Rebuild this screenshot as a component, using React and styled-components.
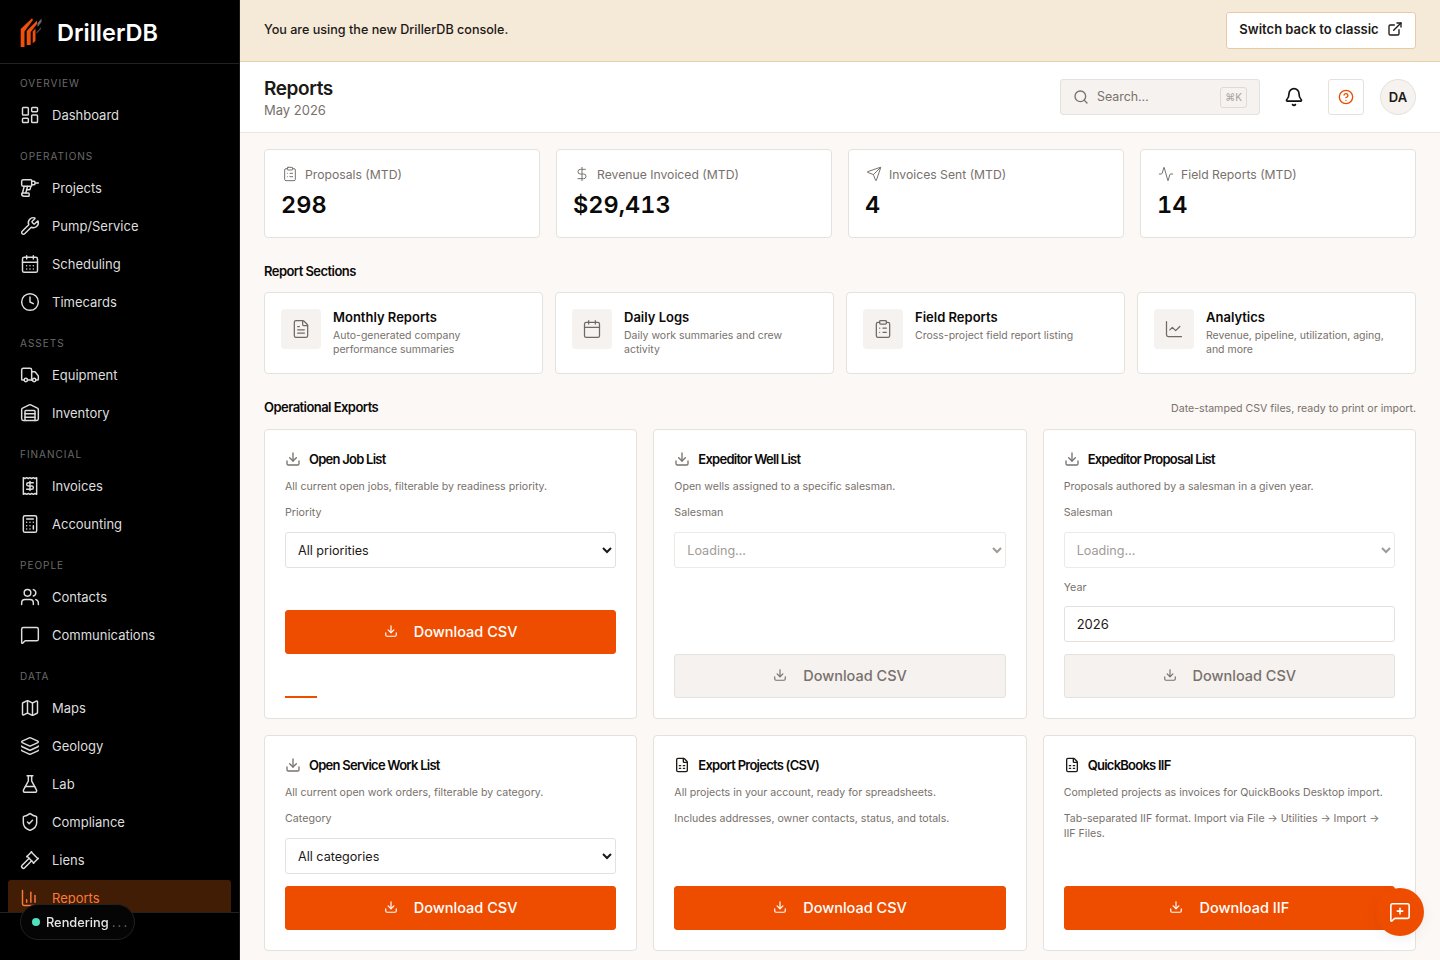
import React from 'react';
import styled, { createGlobalStyle } from 'styled-components';
import {
  Activity, Bell, Calculator, Calendar, CalendarDays, ChartColumn, ChartLine, CircleHelp, ClipboardList, Clock,
  DollarSign, Download, Drill, ExternalLink, FileSpreadsheet, FileText, FlaskConical, Gavel, Layers,
  LayoutDashboard, Map, MessageSquare, MessageSquarePlus, Receipt, Search, Send, ShieldCheck, Truck, Users,
  Warehouse, Wrench,
} from 'lucide-react';

const GlobalStyle = createGlobalStyle`
  * { box-sizing: border-box; }
  html, body { margin: 0; height: 100%; }
  body {
    font-family: Inter, "Liberation Sans", sans-serif;
    color: #1c1917;
    background: #fcf8f5;
  }
`;

const Shell = styled.div`
  display: flex;
  height: 100vh;
  overflow: hidden;
`;

const Sidebar = styled.aside`
  width: 240px;
  flex-shrink: 0;
  display: flex;
  flex-direction: column;
  background: #000;
  border-right: 1px solid #1a1a1a;
`;

const Brand = styled.div`
  height: 64px;
  flex-shrink: 0;
  display: flex;
  align-items: center;
  gap: 15px;
  padding: 2px 0 0 20px;
  border-bottom: 1px solid #222;
  font-size: 23.5px;
  font-weight: 600;
  color: #fff;
`;

const Nav = styled.nav`
  flex: 1;
  min-height: 0;
  overflow: hidden;
  padding: 12px 8px 0;
`;

const NavSection = styled.div`
  margin-bottom: 16px;
`;

const NavHeading = styled.div`
  height: 16px;
  line-height: 15px;
  margin-bottom: 5px;
  padding-left: 12px;
  font-size: 10px;
  letter-spacing: 1px;
  text-transform: uppercase;
  color: #6a6a6a;
`;

const NavItem = styled.a`
  height: 36px;
  margin-bottom: 2px;
  display: flex;
  align-items: center;
  gap: 12px;
  padding: 0 0 1px 12px;
  border-radius: 3px;
  font-size: 13px;
  font-weight: 400;
  color: ${({ $active }) => ($active ? '#f97b3b' : '#dedede')};
  background: ${({ $active }) => ($active ? '#421d05' : 'transparent')};
`;

const SidebarFoot = styled.div`
  height: 48px;
  flex-shrink: 0;
  background: #000;
  border-top: 1px solid #222;
`;

const DevPill = styled.div`
  position: fixed;
  left: 20px;
  bottom: 20px;
  width: 115px;
  height: 36px;
  display: flex;
  align-items: center;
  gap: 6px;
  padding-left: 11px;
  border: 1px solid #222;
  border-radius: 18px;
  background: #050505;
  font-size: 12.8px;
  font-weight: 500;
  color: #e5e5e5;
`;

const DevDot = styled.span`
  width: 8px;
  height: 8px;
  border-radius: 50%;
  background: #4fe0bf;
`;

const DevDots = styled.span`
  margin-left: 3px;
  letter-spacing: 2px;
  color: #666;
`;

const Main = styled.main`
  flex: 1;
  min-width: 0;
  overflow-y: auto;
  scrollbar-width: none;
`;

const Banner = styled.div`
  height: 62px;
  display: flex;
  align-items: center;
  justify-content: space-between;
  padding: 0 24px 1px;
  background: #f5e9d8;
  border-bottom: 1px solid #e8cfa9;
  font-size: 12.6px;
  font-weight: 500;
`;

const BannerText = styled.span`
  margin-top: -2px;
`;

const ClassicButton = styled.button`
  width: 190px;
  height: 37px;
  display: flex;
  align-items: center;
  justify-content: center;
  gap: 8px;
  padding: 0 0 2px;
  background: #fff;
  border: 1px solid #e8cba4;
  border-radius: 3px;
  font-family: inherit;
  font-size: 13px;
  font-weight: 600;
  color: #1c1917;
`;

const PageHeader = styled.header`
  height: 71px;
  display: flex;
  align-items: center;
  padding: 0 24px;
  background: #fff;
  border-bottom: 1px solid #ebe6e1;
`;

const Heading = styled.div`
  flex: 1;
`;

const PageTitle = styled.h1`
  margin: 0;
  font-size: 19px;
  line-height: 28px;
  font-weight: 600;
  letter-spacing: -0.4px;
`;

const PageSub = styled.div`
  margin-top: -2px;
  font-size: 13px;
  line-height: 18px;
  color: #78716c;
`;

const SearchBox = styled.div`
  width: 200px;
  height: 36px;
  display: flex;
  align-items: center;
  gap: 8px;
  padding: 0 12px;
  background: #f5f2ef;
  border: 1px solid #e5e1dc;
  border-radius: 3px;
  font-size: 12.4px;
  color: #78716c;
`;

const SearchText = styled.span`
  flex: 1;
  margin-top: -1px;
`;

const Kbd = styled.span`
  width: 27px;
  height: 21px;
  display: flex;
  align-items: center;
  justify-content: center;
  border: 1px solid #dfdad5;
  border-radius: 3px;
  font-size: 10px;
  color: #a8a29e;
`;

const BellWrap = styled.div`
  width: 36px;
  height: 36px;
  margin: 0 16px;
  display: flex;
  align-items: center;
  justify-content: center;
  color: #111;
`;

const HelpButton = styled.div`
  width: 36px;
  height: 36px;
  margin-right: 16px;
  display: flex;
  align-items: center;
  justify-content: center;
  border: 1px solid #e5e1dc;
  border-radius: 3px;
  background: #fff;
  color: #ee4d00;
`;

const Avatar = styled.div`
  width: 36px;
  height: 36px;
  display: flex;
  align-items: center;
  justify-content: center;
  border: 1px solid #e5e1dc;
  border-radius: 50%;
  background: #f5f2ef;
  font-size: 13px;
  font-weight: 600;
`;

const Content = styled.div`
  padding: 16px 24px;
`;

const KpiGrid = styled.div`
  display: grid;
  grid-template-columns: repeat(4, 1fr);
  gap: 16px;
`;

const KpiCard = styled.div`
  height: 89px;
  padding: 16px 17px 0;
  background: #fff;
  border: 1px solid #e5e1dc;
  border-radius: 4px;
`;

const KpiLabel = styled.div`
  display: flex;
  align-items: center;
  gap: 7px;
  height: 16px;
  font-size: 12.2px;
  color: #78716c;
  svg { color: #78716c; }
`;

const KpiValue = styled.div`
  margin: 7px 0 0 -1px;
  font-size: 23.5px;
  line-height: 32px;
  font-weight: 600;
  font-variant-numeric: tabular-nums;
  color: #0c0a09;
`;

const SectionHead = styled.div`
  display: flex;
  align-items: center;
  justify-content: space-between;
  height: 18px;
  margin: ${({ $top }) => $top}px 0 ${({ $bottom }) => $bottom}px;
`;

const SectionTitle = styled.h2`
  margin: 0;
  font-size: 13px;
  font-weight: 600;
  letter-spacing: -0.55px;
  color: #0c0a09;
`;

const SectionNote = styled.span`
  margin-top: 2px;
  font-size: 10.6px;
  color: #78716c;
`;

const LinkGrid = styled.div`
  display: grid;
  grid-template-columns: repeat(4, 1fr);
  gap: 12px;
`;

const LinkCard = styled.a`
  height: 82px;
  display: flex;
  gap: 12px;
  padding: 16px;
  background: #fff;
  border: 1px solid #e5e1dc;
  border-radius: 4px;
`;

const LinkIcon = styled.div`
  width: 40px;
  height: 40px;
  flex-shrink: 0;
  display: flex;
  align-items: center;
  justify-content: center;
  background: #f5f2ef;
  border-radius: 4px;
  color: #6f6a65;
`;

const LinkTitle = styled.div`
  font-size: 13px;
  line-height: 17px;
  font-weight: 600;
  color: #0c0a09;
`;

const LinkText = styled.div`
  margin-top: 3px;
  font-size: 10.5px;
  line-height: 14px;
  color: #78716c;
`;

const ExportGrid = styled.div`
  display: grid;
  grid-template-columns: repeat(3, 1fr);
  gap: 16px;
`;

const ExportCard = styled.div`
  display: flex;
  flex-direction: column;
  padding: 20px;
  background: #fff;
  border: 1px solid #e5e1dc;
  border-radius: 4px;
`;

const ExportHead = styled.div`
  height: 18px;
  display: flex;
  align-items: center;
  gap: 8px;
  margin-bottom: 11px;
  font-size: 13px;
  font-weight: 600;
  letter-spacing: -0.75px;
  color: #0c0a09;
  svg { color: ${({ $iconColor }) => $iconColor || '#78716c'}; }
`;

const ExportText = styled.p`
  margin: 0 0 11.5px;
  font-size: 10.6px;
  line-height: 15px;
  color: #78716c;

  & + & {
    margin-top: -1px;
  }
`;

const FieldLabel = styled.label`
  display: block;
  height: 14px;
  line-height: 14px;
  margin-bottom: 12.5px;
  font-size: 10.7px;
  color: #78716c;

  select + & {
    margin: 1px 0 11px;
  }
`;

const Select = styled.select`
  width: 100%;
  height: 36px;
  margin-bottom: 12px;
  padding: 0 8px;
  background: #fff;
  border: 1px solid #e5e1dc;
  border-radius: 3px;
  font-family: inherit;
  font-size: 12.6px;
  color: ${({ disabled }) => (disabled ? '#78716c' : '#1c1917')};
`;

const YearInput = styled.input`
  width: 100%;
  height: 36px;
  margin-bottom: 12px;
  padding: 0 12px;
  background: #fff;
  border: 1px solid #e5e1dc;
  border-radius: 3px;
  font-family: inherit;
  font-size: 13px;
  color: #1c1917;
`;

const DownloadButton = styled.button`
  width: 100%;
  height: 44px;
  flex-shrink: 0;
  margin-top: auto;
  display: flex;
  align-items: center;
  justify-content: center;
  gap: 16px;
  padding: 0 0 2px;
  border-radius: 3px;
  font-family: inherit;
  font-size: 14.5px;
  font-weight: 500;
  border: 1px solid ${({ disabled }) => (disabled ? '#e5e1dc' : '#ee4d00')};
  background: ${({ disabled }) => (disabled ? '#f5f2ef' : '#ee4d00')};
  color: ${({ disabled }) => (disabled ? '#78716c' : '#fff')};
`;

const ProgressLine = styled.div`
  width: 32px;
  height: 2px;
  flex-shrink: 0;
  margin-top: 42px;
  background: #ee4d00;
`;

const FeedbackButton = styled.button`
  position: fixed;
  right: 16px;
  bottom: 24px;
  width: 48px;
  height: 48px;
  display: flex;
  align-items: center;
  justify-content: center;
  padding: 0;
  border: 0;
  border-radius: 50%;
  background: #ee4d00;
  color: #fff;
  box-shadow: 0 4px 14px rgba(0, 0, 0, 0.06);
`;

const navGroups = [
  { title: 'Overview', items: [['Dashboard', LayoutDashboard]] },
  {
    title: 'Operations',
    items: [['Projects', Drill], ['Pump/Service', Wrench], ['Scheduling', CalendarDays], ['Timecards', Clock]],
  },
  { title: 'Assets', items: [['Equipment', Truck], ['Inventory', Warehouse]] },
  { title: 'Financial', items: [['Invoices', Receipt], ['Accounting', Calculator]] },
  { title: 'People', items: [['Contacts', Users], ['Communications', MessageSquare]] },
  {
    title: 'Data',
    items: [['Maps', Map], ['Geology', Layers], ['Lab', FlaskConical], ['Compliance', ShieldCheck], ['Liens', Gavel], ['Reports', ChartColumn]],
  },
];

const kpis = [
  ['Proposals (MTD)', '298', ClipboardList],
  ['Revenue Invoiced (MTD)', '$29,413', DollarSign],
  ['Invoices Sent (MTD)', '4', Send],
  ['Field Reports (MTD)', '14', Activity],
];

const sections = [
  ['Monthly Reports', 'Auto-generated company performance summaries', FileText],
  ['Daily Logs', 'Daily work summaries and crew activity', Calendar],
  ['Field Reports', 'Cross-project field report listing', ClipboardList],
  ['Analytics', 'Revenue, pipeline, utilization, aging, and more', ChartLine],
];

const Logo = () => (
  <svg width="22" height="30" viewBox="0 0 22 30">
    <path d="M0.7 11 L12 0.3 L13 2 L4.5 13.5 V29 H0.7 Z" fill="#f0500a" />
    <path d="M6.7 13 L17 2.5 L17 6 L10.7 14 V27 H6.7 Z" fill="#f0500a" />
    <path d="M12.7 13.5 L15.5 10.5 V23 L12.7 25.3 Z" fill="#f0500a" />
    <path d="M17.5 5 L21.5 0.5 V4 L17.5 9 Z" fill="#6b6b6b" />
    <path d="M16.5 14 L21 9 V11 L16.5 16 Z" fill="#454545" />
  </svg>
);

const DownloadCta = ({ label = 'Download CSV', disabled }) => (
  <DownloadButton disabled={disabled}>
    <Download size={14} />
    {label}
  </DownloadButton>
);

const CardTitle = ({ icon: Icon = Download, dark, children }) => (
  <ExportHead $iconColor={dark ? '#1c1917' : null}>
    <Icon size={16} />
    {children}
  </ExportHead>
);

export default function App() {
  return (
    <Shell>
      <GlobalStyle />
      <Sidebar>
        <Brand>
          <Logo />
          DrillerDB
        </Brand>
        <Nav>
          {navGroups.map((group) => (
            <NavSection key={group.title}>
              <NavHeading>{group.title}</NavHeading>
              {group.items.map(([label, Icon]) => (
                <NavItem key={label} $active={label === 'Reports'}>
                  <Icon size={20} strokeWidth={1.75} />
                  {label}
                </NavItem>
              ))}
            </NavSection>
          ))}
        </Nav>
        <SidebarFoot />
      </Sidebar>

      <Main>
        <Banner>
          <BannerText>You are using the new DrillerDB console.</BannerText>
          <ClassicButton>
            Switch back to classic
            <ExternalLink size={16} />
          </ClassicButton>
        </Banner>

        <PageHeader>
          <Heading>
            <PageTitle>Reports</PageTitle>
            <PageSub>May 2026</PageSub>
          </Heading>
          <SearchBox>
            <Search size={16} />
            <SearchText>Search…</SearchText>
            <Kbd>⌘K</Kbd>
          </SearchBox>
          <BellWrap>
            <Bell size={20} />
          </BellWrap>
          <HelpButton>
            <CircleHelp size={16} />
          </HelpButton>
          <Avatar>DA</Avatar>
        </PageHeader>

        <Content>
          <KpiGrid>
            {kpis.map(([label, value, Icon]) => (
              <KpiCard key={label}>
                <KpiLabel>
                  <Icon size={16} strokeWidth={1.5} />
                  {label}
                </KpiLabel>
                <KpiValue>{value}</KpiValue>
              </KpiCard>
            ))}
          </KpiGrid>

          <SectionHead $top={24} $bottom={12}>
            <SectionTitle>Report Sections</SectionTitle>
          </SectionHead>
          <LinkGrid>
            {sections.map(([title, text, Icon]) => (
              <LinkCard key={title}>
                <LinkIcon>
                  <Icon size={20} strokeWidth={1.5} />
                </LinkIcon>
                <div>
                  <LinkTitle>{title}</LinkTitle>
                  <LinkText>{text}</LinkText>
                </div>
              </LinkCard>
            ))}
          </LinkGrid>

          <SectionHead $top={24} $bottom={13}>
            <SectionTitle>Operational Exports</SectionTitle>
            <SectionNote>Date-stamped CSV files, ready to print or import.</SectionNote>
          </SectionHead>
          <ExportGrid>
            <ExportCard>
              <CardTitle>Open Job List</CardTitle>
              <ExportText>All current open jobs, filterable by readiness priority.</ExportText>
              <FieldLabel>Priority</FieldLabel>
              <Select><option>All priorities</option></Select>
              <DownloadCta />
              <ProgressLine />
            </ExportCard>
            <ExportCard>
              <CardTitle>Expeditor Well List</CardTitle>
              <ExportText>Open wells assigned to a specific salesman.</ExportText>
              <FieldLabel>Salesman</FieldLabel>
              <Select disabled><option>Loading…</option></Select>
              <DownloadCta disabled />
            </ExportCard>
            <ExportCard>
              <CardTitle>Expeditor Proposal List</CardTitle>
              <ExportText>Proposals authored by a salesman in a given year.</ExportText>
              <FieldLabel>Salesman</FieldLabel>
              <Select disabled><option>Loading…</option></Select>
              <FieldLabel>Year</FieldLabel>
              <YearInput defaultValue="2026" />
              <DownloadCta disabled />
            </ExportCard>
            <ExportCard>
              <CardTitle>Open Service Work List</CardTitle>
              <ExportText>All current open work orders, filterable by category.</ExportText>
              <FieldLabel>Category</FieldLabel>
              <Select><option>All categories</option></Select>
              <DownloadCta />
            </ExportCard>
            <ExportCard>
              <CardTitle icon={FileSpreadsheet} dark>Export Projects (CSV)</CardTitle>
              <ExportText>All projects in your account, ready for spreadsheets.</ExportText>
              <ExportText>Includes addresses, owner contacts, status, and totals.</ExportText>
              <DownloadCta />
            </ExportCard>
            <ExportCard>
              <CardTitle icon={FileSpreadsheet} dark>QuickBooks IIF</CardTitle>
              <ExportText>Completed projects as invoices for QuickBooks Desktop import.</ExportText>
              <ExportText>
                Tab-separated IIF format. Import via File → Utilities → Import →<br />IIF Files.
              </ExportText>
              <DownloadCta label="Download IIF" />
            </ExportCard>
          </ExportGrid>
        </Content>
      </Main>

      <DevPill>
        <DevDot />
        <span>Rendering<DevDots>...</DevDots></span>
      </DevPill>
      <FeedbackButton aria-label="Send feedback">
        <MessageSquarePlus size={22} strokeWidth={1.75} />
      </FeedbackButton>
    </Shell>
  );
}
